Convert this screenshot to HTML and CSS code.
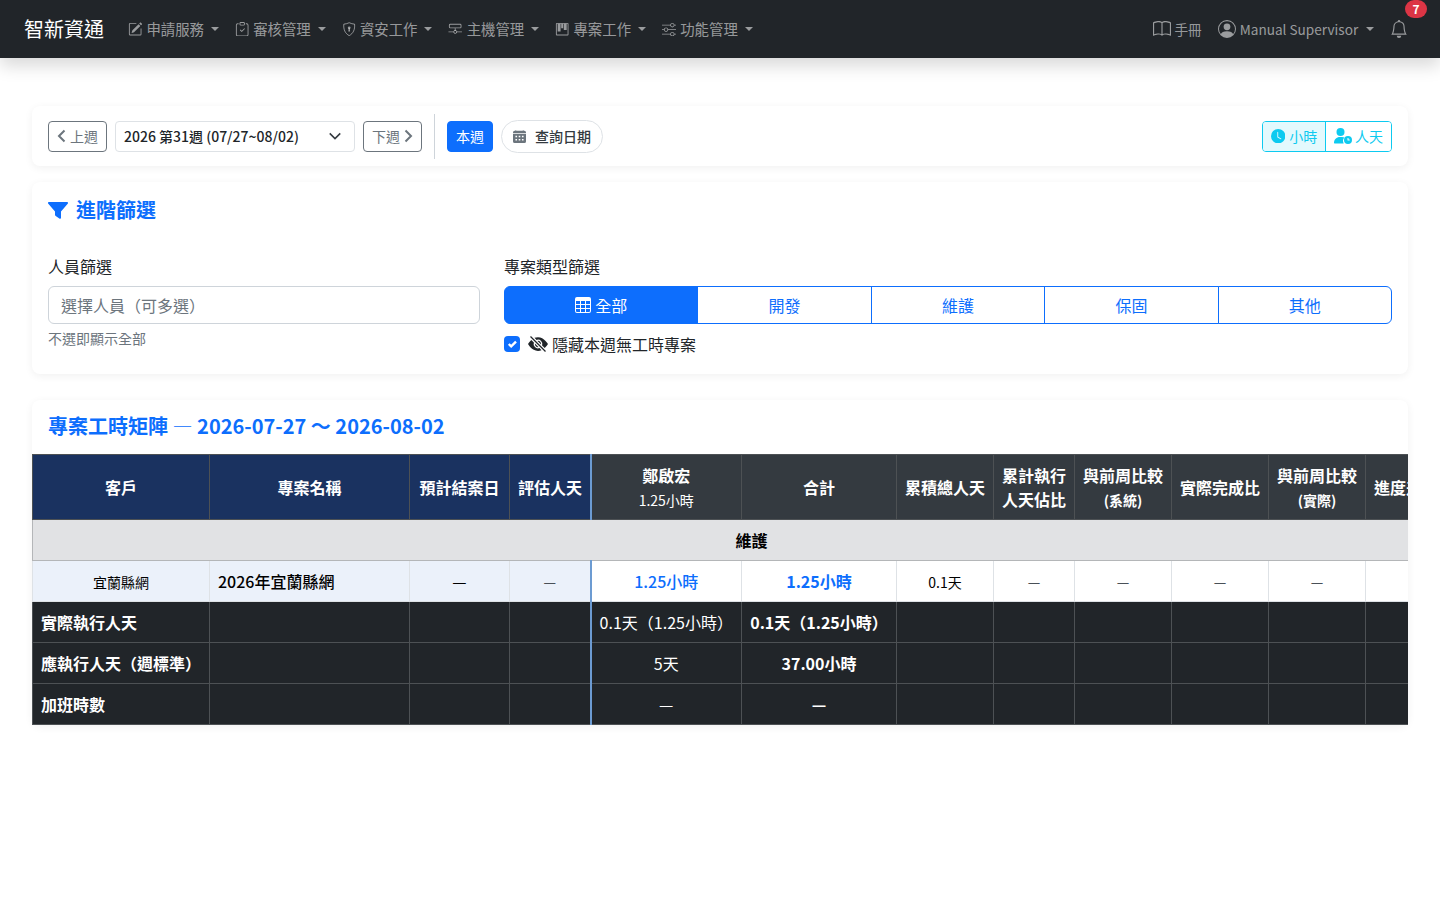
FILE: index.html
```html
<!DOCTYPE html>
<html lang="zh-TW">
  <head>
    <meta charset="UTF-8" />
    <title>專案工時矩陣</title>
    <link rel="stylesheet" href="styles.css">
  </head>
  <body>
    <nav class="navbar">
      <a class="brand">智新資通</a>
      <ul class="nav-menu">
        <li class="nav-link caret">
          <svg class="bi" viewBox="0 0 16 16"><path d="M15.502 1.94a.5.5 0 0 1 0 .706L14.459 3.69l-2-2L13.502.646a.5.5 0 0 1 .707 0l1.293 1.293zm-1.75 2.456-2-2L4.939 9.21a.5.5 0 0 0-.121.196l-.805 2.414a.25.25 0 0 0 .316.316l2.414-.805a.5.5 0 0 0 .196-.12l6.813-6.814z"/><path fill-rule="evenodd" d="M1 13.5A1.5 1.5 0 0 0 2.5 15h11a1.5 1.5 0 0 0 1.5-1.5v-6a.5.5 0 0 0-1 0v6a.5.5 0 0 1-.5.5h-11a.5.5 0 0 1-.5-.5v-11a.5.5 0 0 1 .5-.5H9a.5.5 0 0 0 0-1H2.5A1.5 1.5 0 0 0 1 2.5v11z"/></svg>
          申請服務
        </li>
        <li class="nav-link caret">
          <svg class="bi" viewBox="0 0 16 16"><path fill-rule="evenodd" d="M10.854 7.146a.5.5 0 0 1 0 .708l-3 3a.5.5 0 0 1-.708 0l-1.5-1.5a.5.5 0 1 1 .708-.708L7.5 9.793l2.646-2.647a.5.5 0 0 1 .708 0z"/><path d="M4 1.5H3a2 2 0 0 0-2 2V14a2 2 0 0 0 2 2h10a2 2 0 0 0 2-2V3.5a2 2 0 0 0-2-2h-1v1h1a1 1 0 0 1 1 1V14a1 1 0 0 1-1 1H3a1 1 0 0 1-1-1V3.5a1 1 0 0 1 1-1h1v-1z"/><path d="M9.5 1a.5.5 0 0 1 .5.5v1a.5.5 0 0 1-.5.5h-3a.5.5 0 0 1-.5-.5v-1a.5.5 0 0 1 .5-.5h3zm-3-1A1.5 1.5 0 0 0 5 1.5v1A1.5 1.5 0 0 0 6.5 4h3A1.5 1.5 0 0 0 11 2.5v-1A1.5 1.5 0 0 0 9.5 0h-3z"/></svg>
          審核管理
        </li>
        <li class="nav-link caret">
          <svg class="bi" viewBox="0 0 16 16"><path d="M8 .8c1.900.900 3.900 1.400 6 1.600.5 6-1.500 10.300-6 12.800-4.500-2.500-6.500-6.800-6-12.800 2.100-.2 4.100-.7 6-1.600z" fill="none" stroke="currentColor"/><circle cx="8" cy="6.500" r="1.500"/><path d="M7.400 7h1.200l.4 3.500H7z"/></svg>
          資安工作
        </li>
        <li class="nav-link caret">
          <svg class="bi" viewBox="0 0 16 16"><path d="M2.500 2h11A1.500 1.500 0 0 1 15 3.500v2A1.500 1.500 0 0 1 13.500 7h-11A1.500 1.500 0 0 1 1 5.500v-2A1.500 1.500 0 0 1 2.500 2zm0 1a.5.5 0 0 0-.5.5v2a.5.5 0 0 0 .5.5h11a.5.5 0 0 0 .5-.5v-2a.5.5 0 0 0-.5-.5h-11z"/><path d="M7.500 7h1v3h-1zM.5 10.500H6v1H.5zM10 10.500h5.500v1H10z"/><circle cx="8" cy="11" r="1.700" fill="none" stroke="currentColor"/></svg>
          主機管理
        </li>
        <li class="nav-link caret">
          <svg class="bi" viewBox="0 0 16 16"><path d="M2 1h12a1 1 0 0 1 1 1v12a1 1 0 0 1-1 1H2a1 1 0 0 1-1-1V2a1 1 0 0 1 1-1zm0 1v12h12V2H2z"/><path d="M3 2h3.200v8.500H3zM6.900 2h2.200v5H6.900zM9.800 2H13v7H9.800z"/></svg>
          專案工作
        </li>
        <li class="nav-link caret">
          <svg class="bi" viewBox="0 0 16 16"><path fill-rule="evenodd" d="M11.500 2a1.500 1.500 0 1 0 0 3 1.500 1.500 0 0 0 0-3zM9.050 3a2.500 2.500 0 0 1 4.900 0H16v1h-2.050a2.500 2.500 0 0 1-4.900 0H0V3h9.050zM4.500 7a1.500 1.500 0 1 0 0 3 1.500 1.500 0 0 0 0-3zM2.050 8a2.500 2.500 0 0 1 4.900 0H16v1H6.950a2.500 2.500 0 0 1-4.900 0H0V8h2.050zm9.450 4a1.500 1.500 0 1 0 0 3 1.500 1.500 0 0 0 0-3zm-2.450 1a2.500 2.500 0 0 1 4.900 0H16v1h-2.050a2.500 2.500 0 0 1-4.900 0H0v-1h9.050z"/></svg>
          功能管理
        </li>
      </ul>
      <ul class="nav-menu nav-right">
        <li class="nav-link nav-small">
          <svg class="bi bi-lg" viewBox="0 0 16 16"><path d="M1 2.828c.885-.37 2.154-.769 3.388-.893 1.330-.134 2.458.063 3.112.752v9.746c-.935-.53-2.120-.603-3.213-.493-1.180.120-2.370.461-3.287.811V2.828zm7.500-.141c.654-.689 1.782-.886 3.112-.752 1.234.124 2.503.523 3.388.893v9.923c-.918-.35-2.107-.692-3.287-.81-1.094-.111-2.278-.039-3.213.492V2.687zM8 1.783C7.015.936 5.587.810 4.287.940c-1.514.153-3.042.672-3.994 1.105A.5.500 0 0 0 0 2.500v11a.5.500 0 0 0 .707.455c.882-.400 2.303-.881 3.680-1.020 1.409-.142 2.590.087 3.223.877a.5.500 0 0 0 .780 0c.633-.790 1.814-1.019 3.222-.877 1.378.139 2.800.620 3.681 1.020A.5.500 0 0 0 16 13.500v-11a.5.500 0 0 0-.293-.455c-.952-.433-2.480-.952-3.994-1.105C10.413.809 8.985.936 8 1.783z"/></svg>
          手冊
        </li>
        <li class="nav-link nav-small caret">
          <svg class="bi bi-lg" viewBox="0 0 16 16"><path d="M11 6a3 3 0 1 1-6 0 3 3 0 0 1 6 0z"/><path fill-rule="evenodd" d="M0 8a8 8 0 1 1 16 0A8 8 0 0 1 0 8zm8-7a7 7 0 0 0-5.468 11.370C3.242 11.226 4.805 10 8 10s4.757 1.225 5.468 2.370A7 7 0 0 0 8 1z"/></svg>
          Manual Supervisor
        </li>
        <li class="nav-link bell">
          <svg class="bi bi-bell" viewBox="0 0 16 16"><path d="M8 16a2 2 0 0 0 2-2H6a2 2 0 0 0 2 2zM8 1.918l-.797.161A4.002 4.002 0 0 0 4 6c0 .628-.134 2.197-.459 3.742-.160.767-.376 1.566-.663 2.258h10.244c-.287-.692-.502-1.490-.663-2.258C12.134 8.197 12 6.628 12 6a4.002 4.002 0 0 0-3.203-3.920L8 1.917zM14.220 12c.223.447.481.801.780 1H1c.299-.199.557-.553.780-1C2.680 10.200 3 6.880 3 6c0-2.420 1.720-4.440 4.005-4.901a1 1 0 1 1 1.990 0A5.002 5.002 0 0 1 13 6c0 .880.320 4.200 1.220 6z"/></svg>
          <span class="badge">7</span>
        </li>
      </ul>
    </nav>

    <main class="page">
      <section class="card toolbar">
        <div class="toolbar-left">
          <button class="btn btn-outline">
            <svg class="chev" viewBox="0 0 9 14"><path d="M7.500 1.500 2 7l5.500 5.500" /></svg>
            <span>上週</span>
          </button>
          <div class="week-select">
            <span>2026 第31週 (07/27~08/02)</span>
            <svg class="select-arrow" viewBox="0 0 16 16"><path d="M2 5l6 6 6-6" /></svg>
          </div>
          <button class="btn btn-outline">
            <span>下週</span>
            <svg class="chev" viewBox="0 0 9 14"><path d="M1.500 1.500 7 7l-5.500 5.500" /></svg>
          </button>
          <div class="divider"></div>
          <button class="btn btn-primary">本週</button>
          <button class="btn btn-pill">
            <svg class="bi" viewBox="0 0 16 16"><path d="M4 .5a.5.5 0 0 0-1 0V1H2a2 2 0 0 0-2 2v1h16V3a2 2 0 0 0-2-2h-1V.5a.5.5 0 0 0-1 0V1H4V.5z"/><path fill-rule="evenodd" d="M16 14V5H0v9a2 2 0 0 0 2 2h12a2 2 0 0 0 2-2zM3 7h2v2H3V7zm4 0h2v2H7V7zm4 0h2v2h-2V7zm-8 4h2v2H3v-2zm4 0h2v2H7v-2zm4 0h2v2h-2v-2z"/></svg>
            查詢日期
          </button>
        </div>
        <div class="unit-toggle">
          <button class="unit-btn active">
            <svg class="bi" viewBox="0 0 16 16"><path d="M16 8A8 8 0 1 1 0 8a8 8 0 0 1 16 0zM8 3.500a.5.5 0 0 0-1 0V9a.5.5 0 0 0 .252.434l3.500 2a.5.5 0 0 0 .496-.868L8 8.710V3.500z"/></svg>
            小時
          </button>
          <button class="unit-btn">
            <svg class="bi bi-wide" viewBox="0 0 18 16"><circle cx="6.500" cy="4" r="4"/><path d="M0 15c0-3.500 2.500-6 6-6h2c1 0 1.800.2 2.500.6A5 5 0 0 0 9.700 15.500H.6C.3 15.500 0 15.300 0 15z"/><path fill-rule="evenodd" d="M14 8a4 4 0 1 1 0 8 4 4 0 0 1 0-8zm-.5 2v2.500h2.200v-1h-1.200V10h-1z"/></svg>
            人天
          </button>
        </div>
      </section>

      <section class="card filter-card">
        <h5 class="filter-title">
          <svg class="filter-icon" viewBox="0 0 20 18"><path d="M1 0h18c.9 0 1.300 1 .7 1.700L13 9.500V16c0 .7-.7 1-1.300.7l-4-2.700c-.3-.2-.7-.6-.7-1V9.500L.3 1.700C-.3 1 .1 0 1 0z"/></svg>
          進階篩選
        </h5>
        <div class="filter-grid">
          <div>
            <label class="form-label">人員篩選</label>
            <div class="form-input">選擇人員（可多選）</div>
            <div class="form-help">不選即顯示全部</div>
          </div>
          <div>
            <label class="form-label">專案類型篩選</label>
            <div class="btn-group">
              <button class="group-btn active">
                <svg class="bi bi-md" viewBox="0 0 16 16"><path d="M0 2a2 2 0 0 1 2-2h12a2 2 0 0 1 2 2v12a2 2 0 0 1-2 2H2a2 2 0 0 1-2-2V2zm15 2h-4v3h4V4zm0 4h-4v3h4V8zm0 4h-4v3h3a1 1 0 0 0 1-1v-2zm-5 3v-3H6v3h4zm-5 0v-3H1v2a1 1 0 0 0 1 1h3zm-4-4h4V8H1v3zm0-4h4V4H1v3zm5-3v3h4V4H6zm4 4H6v3h4V8z"/></svg>
                全部
              </button>
              <button class="group-btn">開發</button>
              <button class="group-btn">維護</button>
              <button class="group-btn">保固</button>
              <button class="group-btn">其他</button>
            </div>
            <div class="check-row">
              <span class="checkbox">
                <svg viewBox="0 0 20 20"><path d="M6 10l3 3 6-6" /></svg>
              </span>
              <svg class="bi bi-eye" viewBox="0 0 16 16"><path d="m10.790 12.912-1.614-1.615a3.500 3.500 0 0 1-4.474-4.474l-2.060-2.060C.938 6.278 0 8 0 8s3 5.500 8 5.500a7.029 7.029 0 0 0 2.790-.588zM5.210 3.088A7.028 7.028 0 0 1 8 2.500c5 0 8 5.500 8 5.500s-.939 1.721-2.641 3.238l-2.062-2.062a3.500 3.500 0 0 0-4.474-4.474L5.210 3.089z"/><path d="M5.525 7.646a2.500 2.500 0 0 0 2.829 2.829l-2.830-2.829zm4.950.708-2.829-2.830a2.500 2.500 0 0 1 2.829 2.829zm3.171 6-12-12 .708-.708 12 12-.708.708z"/></svg>
              隱藏本週無工時專案
            </div>
          </div>
        </div>
      </section>

      <section class="card matrix-card">
        <h5 class="matrix-title">專案工時矩陣 <span class="title-dash">—</span> 2026-07-27 ～ 2026-08-02</h5>
        <div class="table-wrap">
          <table class="matrix">
            <colgroup>
              <col class="w-client"><col class="w-project"><col class="w-date"><col class="w-est">
              <col class="w-person"><col class="w-total"><col class="w-std"><col class="w-ratio">
              <col class="w-std"><col class="w-std"><col class="w-std"><col class="w-ratio">
            </colgroup>
            <thead>
              <tr>
                <th class="navy">客戶</th>
                <th class="navy">專案名稱</th>
                <th class="navy">預計結案日</th>
                <th class="navy split">評估人天</th>
                <th>鄭啟宏<small class="sub-light">1.25小時</small></th>
                <th>合計</th>
                <th>累積總人天</th>
                <th>累計執行<br>人天佔比</th>
                <th>與前周比較<small>(系統)</small></th>
                <th>實際完成比</th>
                <th>與前周比較<small>(實際)</small></th>
                <th>進度差異</th>
              </tr>
            </thead>
            <tbody>
              <tr class="group-row">
                <td colspan="12"><span class="group-label">維護</span></td>
              </tr>
              <tr class="data-row">
                <td class="frozen client">宜蘭縣網</td>
                <td class="frozen project">2026年宜蘭縣網</td>
                <td class="frozen">—</td>
                <td class="frozen split muted">—</td>
                <td class="link">1.25小時</td>
                <td class="link strong">1.25小時</td>
                <td class="small">0.1天</td>
                <td class="muted">—</td>
                <td class="muted">—</td>
                <td class="muted">—</td>
                <td class="muted">—</td>
                <td></td>
              </tr>
            </tbody>
            <tfoot>
              <tr>
                <th class="row-head">實際執行人天</th><td></td><td></td><td class="split"></td>
                <td>0.1天（1.25小時）</td><td class="strong">0.1天（1.25小時）</td>
                <td></td><td></td><td></td><td></td><td></td><td></td>
              </tr>
              <tr>
                <th class="row-head">應執行人天（週標準）</th><td></td><td></td><td class="split"></td>
                <td>5天</td><td class="strong">37.00小時</td>
                <td></td><td></td><td></td><td></td><td></td><td></td>
              </tr>
              <tr>
                <th class="row-head">加班時數</th><td></td><td></td><td class="split"></td>
                <td>—</td><td class="strong">—</td>
                <td></td><td></td><td></td><td></td><td></td><td></td>
              </tr>
            </tfoot>
          </table>
        </div>
      </section>
    </main>
  </body>
</html>
```

FILE: styles.css
```css
* {
  margin: 0;
  padding: 0;
  box-sizing: border-box;
}

body {
  width: 1440px;
  height: 900px;
  overflow: hidden;
  background: #ffffff;
  font-family: "Noto Sans CJK TC", "Noto Sans", sans-serif;
  font-size: 16px;
  line-height: 1.5;
  color: #212529;
}

button {
  font-family: inherit;
  cursor: pointer;
}

.bi {
  width: 14.4px;
  height: 14.4px;
  fill: currentColor;
  flex-shrink: 0;
}

.bi-lg {
  width: 18px;
  height: 18px;
}

.bi-md {
  width: 16px;
  height: 16px;
}

.bi-wide {
  width: 18px;
  height: 16px;
  margin-right: -1px;
}

/* navbar */
.navbar {
  height: 58px;
  background: #212529;
  display: flex;
  align-items: center;
  padding: 0 24px;
  box-shadow: 0 8px 16px rgba(0, 0, 0, 0.15);
  position: relative;
}

.brand {
  font-size: 20px;
  color: #ffffff;
  margin-right: 16px;
}

.nav-menu {
  display: flex;
  align-items: center;
  list-style: none;
}

.nav-right {
  margin-left: auto;
}

.nav-link {
  display: flex;
  align-items: center;
  gap: 4px;
  padding: 0 8px;
  font-size: 14.4px;
  color: rgba(255, 255, 255, 0.55);
  white-space: nowrap;
}

.nav-small {
  font-size: 13.6px;
}

.caret::after {
  content: "";
  margin-left: 2.8px;
  border-top: 4.3px solid currentColor;
  border-left: 4.3px solid transparent;
  border-right: 4.3px solid transparent;
}

.nav-small.caret::after {
  margin-left: 3.8px;
}

.bell {
  position: relative;
  padding: 0 8px;
}

.bi-bell {
  width: 18px;
  height: 18px;
}

.badge {
  position: absolute;
  top: -20px;
  left: 23px;
  min-width: 22px;
  height: 18px;
  border-radius: 9px;
  background: #dc3545;
  color: #ffffff;
  font-size: 12px;
  font-weight: 700;
  line-height: 18px;
  text-align: center;
}

/* cards */
.page {
  padding: 48px 32px 0;
}

.card {
  background: #ffffff;
  border-radius: 8px;
  box-shadow: 0 2px 8px rgba(0, 0, 0, 0.06);
}

.toolbar {
  height: 60px;
  padding: 0 16px;
  display: flex;
  align-items: center;
  justify-content: space-between;
}

.toolbar-left {
  display: flex;
  align-items: center;
}

.btn {
  height: 31px;
  font-size: 14px;
  border-radius: 4px;
  display: inline-flex;
  align-items: center;
  gap: 4px;
  background: #ffffff;
}

.btn-outline {
  width: 59px;
  justify-content: center;
  border: 1px solid #6c757d;
  color: #6c757d;
}

.chev {
  width: 9px;
  height: 14px;
  fill: none;
  stroke: #6c757d;
  stroke-width: 2;
}

.week-select {
  width: 240px;
  height: 31px;
  margin: 0 8px;
  padding: 0 8px;
  border: 1px solid #dee2e6;
  border-radius: 4px;
  display: flex;
  align-items: center;
  justify-content: space-between;
  font-size: 14px;
  font-weight: 500;
  color: #212529;
}

.select-arrow {
  width: 14px;
  height: 14px;
  margin-right: 4px;
  fill: none;
  stroke: #343a40;
  stroke-width: 1.8;
}

.divider {
  width: 1px;
  height: 45px;
  background: #ced4da;
  margin: 0 12px;
}

.btn-primary {
  width: 46px;
  justify-content: center;
  border: 1px solid #0d6efd;
  background: #0d6efd;
  color: #ffffff;
}

.btn-pill {
  width: 102px;
  height: 33px;
  margin-left: 8px;
  justify-content: center;
  gap: 9px;
  border: 1px solid #dee2e6;
  border-radius: 17px;
  font-weight: 500;
  color: #343a40;
}

.btn-pill .bi {
  width: 13px;
  height: 13px;
  color: #6c757d;
}

.unit-toggle {
  display: flex;
  height: 31px;
  border: 1px solid #0dcaf0;
  border-radius: 4px;
  overflow: hidden;
}

.unit-btn {
  width: 65px;
  display: flex;
  align-items: center;
  justify-content: center;
  gap: 4px;
  border: none;
  background: #ffffff;
  color: #0dcaf0;
  font-size: 14px;
}

.unit-btn.active {
  width: 63px;
  background: #e3f9fd;
  border-right: 1px solid #0dcaf0;
}

/* filter */
.filter-card {
  margin-top: 16px;
  height: 192px;
  padding: 12px 16px 0;
}

.filter-title {
  display: flex;
  align-items: center;
  gap: 8px;
  height: 32px;
  font-size: 20px;
  font-weight: 700;
  line-height: 32px;
  color: #0d6efd;
}

.filter-icon {
  width: 20px;
  height: 18px;
  margin-top: 1px;
  fill: #0d6efd;
}

.filter-grid {
  display: grid;
  grid-template-columns: 432px 1fr;
  gap: 24px;
  margin-top: 28px;
}

.form-label {
  display: block;
  height: 24px;
  margin-bottom: 8px;
}

.form-input {
  height: 38px;
  padding: 6px 12px;
  border: 1px solid #ced4da;
  border-radius: 6px;
  color: #6c757d;
}

.form-help {
  margin-top: 4px;
  font-size: 14px;
  color: #6c757d;
}

.btn-group {
  display: flex;
  height: 38px;
}

.group-btn {
  flex: 1 1 auto;
  display: flex;
  align-items: center;
  justify-content: center;
  gap: 4px;
  padding: 0 12px;
  margin-left: -1px;
  border: 1px solid #0d6efd;
  background: #ffffff;
  color: #0d6efd;
  font-size: 16px;
}

.group-btn:first-child {
  margin-left: 0;
  border-radius: 6px 0 0 6px;
}

.group-btn:last-child {
  border-radius: 0 6px 6px 0;
}

.group-btn.active {
  background: #0d6efd;
  color: #ffffff;
}

.check-row {
  display: flex;
  align-items: center;
  margin-top: 8px;
  height: 24px;
}

.checkbox {
  width: 16px;
  height: 16px;
  margin-right: 8px;
  border-radius: 4px;
  background: #0d6efd;
  display: block;
}

.checkbox svg {
  display: block;
  fill: none;
  stroke: #ffffff;
  stroke-width: 3;
}

.bi-eye {
  width: 20px;
  height: 20px;
  margin-right: 4px;
}

/* matrix */
.matrix-card {
  margin-top: 26px;
}

.matrix-title {
  height: 54px;
  padding: 11px 16px 0;
  font-size: 20px;
  font-weight: 700;
  line-height: 30px;
  color: #0d6efd;
}

.title-dash {
  font-weight: 400;
}

.table-wrap {
  overflow: hidden;
}

.matrix {
  width: 1414px;
  table-layout: fixed;
  border-collapse: collapse;
  text-align: center;
}

.w-client { width: 177px; }
.w-project { width: 200px; }
.w-date { width: 100px; }
.w-est { width: 81px; }
.w-person { width: 151px; }
.w-total { width: 155px; }
.w-std { width: 97px; }
.w-ratio { width: 81px; }

.matrix th,
.matrix td {
  padding: 0 8px;
  vertical-align: middle;
  white-space: nowrap;
}

.matrix thead tr {
  height: 65px;
}

.matrix thead th {
  background: #343a40;
  border: 1px solid #4d5154;
  color: #ffffff;
  font-size: 16px;
  font-weight: 700;
  line-height: 24px;
}

.matrix thead th.navy {
  background: #1a3260;
}

.matrix th small {
  display: block;
  padding-top: 1px;
  font-size: 14px;
  line-height: 24px;
}

.matrix th small.sub-light {
  font-weight: 400;
}

.matrix .split {
  border-right: 2px solid #6c9bd2;
}

.group-row {
  height: 41px;
}

.group-row td {
  background: #e1e2e4;
  border: 1px solid #b4b6b8;
  font-weight: 700;
  color: #000000;
}

.group-label {
  margin-left: 24px;
}

.data-row {
  height: 41px;
}

.data-row td {
  border: 1px solid #dee2e6;
  color: #000000;
}

.data-row .frozen {
  background: #ebf1fa;
}

.data-row .client {
  padding-top: 2px;
  font-size: 14px;
}

.data-row .project {
  text-align: left;
  font-weight: 500;
}

.data-row .small {
  padding-top: 2px;
  font-size: 14px;
}

.data-row .muted {
  color: #495057;
  font-size: 14px;
}

.data-row .link {
  color: #0d6efd;
  font-weight: 500;
}

.data-row .link.strong {
  font-weight: 700;
}

.matrix tfoot tr {
  height: 41px;
}

.matrix tfoot th,
.matrix tfoot td {
  background: #212529;
  border: 1px solid #4d5154;
  color: #ffffff;
  font-weight: 400;
}

.matrix tfoot .row-head {
  text-align: left;
  font-weight: 700;
}

.matrix tfoot .strong {
  font-weight: 700;
}
```
